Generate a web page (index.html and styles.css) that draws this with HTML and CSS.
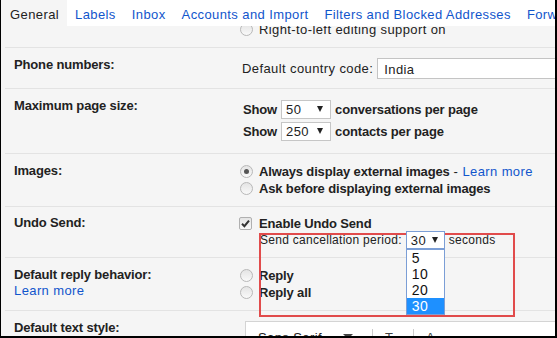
FILE: index.html
```html
<!DOCTYPE html>
<html lang="en">
<head>
  <meta charset="UTF-8" />
  <title>Settings - General</title>
  <link rel="stylesheet" href="styles.css">
</head>
<body>
  <div class="frame">
    <div class="tabs">
      <span class="tab tab-active">General</span>
      <span class="tab">Labels</span>
      <span class="tab">Inbox</span>
      <span class="tab">Accounts and Import</span>
      <span class="tab">Filters and Blocked Addresses</span>
      <span class="tab">Forwarding and POP/IMAP</span>
    </div>

    <div class="scroll">
      <div class="settings">

        <div class="row">
          <div class="label"></div>
          <div class="field">
            <div class="line"><span class="radio"></span>Right-to-left editing support on</div>
          </div>
        </div>

        <div class="row">
          <div class="label">Phone numbers:</div>
          <div class="field field-phone">
            <div class="line line-input">
              <span class="txt">Default country code:</span>
              <span class="input">India</span>
            </div>
          </div>
        </div>

        <div class="row">
          <div class="label">Maximum page size:</div>
          <div class="field field-pages">
            <div class="line line-select">
              <b class="txt">Show</b>
              <span class="select"><span>50</span><span class="arrow"></span></span>
              <b>conversations per page</b>
            </div>
            <div class="line line-select">
              <b class="txt">Show</b>
              <span class="select"><span>250</span><span class="arrow"></span></span>
              <b>contacts per page</b>
            </div>
          </div>
        </div>

        <div class="row">
          <div class="label">Images:</div>
          <div class="field">
            <div class="line"><span class="radio radio-on"></span><b>Always display external images</b>&nbsp;-&nbsp;<a class="link">Learn more</a></div>
            <div class="line"><span class="radio"></span><b>Ask before displaying external images</b></div>
          </div>
        </div>

        <div class="row row-undo">
          <div class="label">Undo Send:</div>
          <div class="field field-undo">
            <div class="line line-check">
              <span class="checkbox">
                <svg width="11" height="11" viewBox="0 0 11 11"><path d="M2 5.8l2.4 2.4L9 2.6" fill="none" stroke="#333" stroke-width="2"/></svg>
              </span>
              <b>Enable Undo Send</b>
            </div>
            <div class="line line-period">
              <span class="txt">Send cancellation period:</span>
              <span class="select select-open">
                <span>30</span><span class="arrow"></span>
                <span class="dropdown">
                  <span class="option">5</span>
                  <span class="option">10</span>
                  <span class="option">20</span>
                  <span class="option option-active">30</span>
                </span>
              </span>
              <span>seconds</span>
            </div>
            <div class="highlight"></div>
          </div>
        </div>

        <div class="row">
          <div class="label">Default reply behavior:<br><a class="link">Learn more</a></div>
          <div class="field">
            <div class="line"><span class="radio"></span><b>Reply</b></div>
            <div class="line"><span class="radio"></span><b>Reply all</b></div>
          </div>
        </div>

        <div class="row">
          <div class="label">Default text style:</div>
          <div class="field">
            <div class="toolbar">
              <span class="tb-font">Sans Serif<span class="tb-arrow"></span></span>
              <span class="tb-sep"></span>
              <span class="tb-icon">T</span>
              <span class="tb-sep"></span>
              <span class="tb-icon">A</span>
            </div>
          </div>
        </div>

      </div>
    </div>
  </div>
</body>
</html>
```

FILE: styles.css
```css
* {
  box-sizing: border-box;
}
body {
  margin: 0;
  font-family: 'Liberation Sans', Arial, sans-serif;
  font-size: 13px;
  letter-spacing: 0.4px;
  color: #222;
  background: #fff;
}
b {
  letter-spacing: -0.15px;
}
.frame {
  width: 557px;
  height: 338px;
  border-left: 1px solid #000;
  border-right: 2px solid #000;
  border-bottom: 2px solid #000;
  background: #f5f5f5;
  display: flex;
  flex-direction: column;
  overflow: hidden;
}

/* tabs */
.tabs {
  flex: none;
  height: 26px;
  background: #fff;
  display: flex;
  white-space: nowrap;
  overflow: hidden;
}
.tab {
  flex: none;
  padding: 7px 8px 0;
  line-height: 16px;
  color: #15c;
}
.tab:first-child {
  padding-left: 9px;
}
.tab-active {
  color: #222;
  background: #f5f5f5;
}

/* settings list, scrolled a little */
.scroll {
  flex: 1;
  overflow: hidden;
}
.settings {
  margin-top: -15px;
}
.row {
  display: grid;
  grid-template-columns: 235px 1fr;
  margin-left: 4px;
  border-top: 1px solid #e3e3e3;
  padding: 9px 0;
}
.row-undo {
  padding: 8px 0;
}
.label {
  padding-left: 9px;
  font-weight: bold;
  letter-spacing: -0.15px;
  line-height: 16px;
}
.link {
  color: #15c;
  font-weight: normal;
  letter-spacing: 0.4px;
}
.field {
  position: relative;
}
.line {
  display: flex;
  align-items: center;
  height: 17px;
  white-space: nowrap;
}
.txt {
  margin-left: 2px;
}

/* phone */
.field-phone {
  padding-top: 1px;
}
.line-input {
  height: 21px;
}
.input {
  flex: 1;
  height: 21px;
  margin-left: 4px;
  padding: 3px 6px 0;
  background: #fff;
  border: 1px solid #c4c4c4;
  border-right: none;
}

/* page size */
.field-pages {
  padding: 1px 0 3px;
  display: flex;
  flex-direction: column;
  gap: 2px;
}
.line-select {
  height: 20px;
}
.line-select .txt {
  margin-left: 3px;
}
.select {
  position: relative;
  display: inline-flex;
  align-items: center;
  justify-content: space-between;
  width: 50px;
  height: 19px;
  margin: 0 4px;
  padding: 0 7px 0 4px;
  background: #fff;
  border: 1px solid #c6c6c6;
  font-weight: normal;
  letter-spacing: 0.4px;
}
.arrow {
  border-left: 3.5px solid transparent;
  border-right: 3.5px solid transparent;
  border-top: 6px solid #222;
}

/* radios and checkbox */
.radio {
  flex: none;
  width: 13px;
  height: 13px;
  margin-right: 6px;
  border-radius: 50%;
  border: 1px solid #b8b8b8;
  background: linear-gradient(#e4e4e4, #f9f9f9);
  display: flex;
  align-items: center;
  justify-content: center;
}
.radio-on::after {
  content: '';
  width: 5px;
  height: 5px;
  border-radius: 50%;
  background: #555;
}
.checkbox {
  flex: none;
  width: 13px;
  height: 13px;
  margin: 0 7px 0 -1px;
  border-radius: 2px;
  border: 1px solid #b0b0b0;
  background: linear-gradient(#e4e4e4, #f9f9f9);
  display: flex;
  align-items: center;
  justify-content: center;
}

/* undo send */
.line-check {
  height: 16px;
}
.line-period {
  height: 18px;
  padding-left: 18px;
  font-size: 12px;
  letter-spacing: 0.28px;
}
.select-open {
  width: 39px;
  height: 18px;
  padding: 0 6px 0 4px;
  font-size: 13px;
  border-color: #7b9ed6;
  z-index: 2;
}
.dropdown {
  position: absolute;
  left: -1px;
  top: calc(100% + 1px);
  width: 39px;
  background: #fff;
  border: 1px solid #7b9ed6;
  display: flex;
  flex-direction: column;
}
.option {
  height: 16px;
  line-height: 16px;
  padding-left: 5px;
  font-size: 14px;
  color: #111;
}
.option-active {
  background: #1e90ff;
  color: #fff;
}
.highlight {
  position: absolute;
  left: 19px;
  top: 18px;
  width: 256px;
  height: 84px;
  border: 2px solid #e14b4b;
  z-index: 1;
}

/* text style toolbar */
.toolbar {
  display: flex;
  align-items: flex-start;
  height: 40px;
  margin: 1px 0 0 5px;
  padding: 8px 0 0 12px;
  background: #fff;
  border: 1px solid #d4d4d4;
  border-right: none;
}
.tb-font {
  display: flex;
  justify-content: space-between;
  width: 103px;
  padding-right: 8px;
}
.tb-arrow {
  margin-top: 4px;
  border-left: 5px solid transparent;
  border-right: 5px solid transparent;
  border-top: 5px solid #444;
}
.tb-sep {
  width: 1px;
  height: 20px;
  margin: -1px 12px 0 11px;
  background: #ccc;
}
.tb-icon {
  width: 17px;
  color: #444;
}
```
